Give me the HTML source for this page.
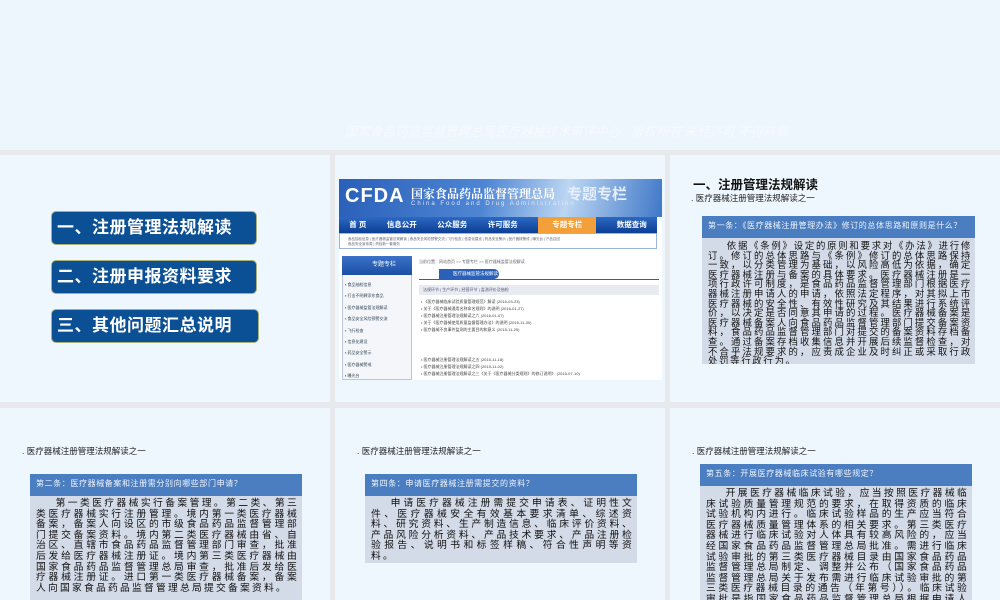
<!DOCTYPE html>
<html><head><meta charset="utf-8"><style>
*{margin:0;padding:0;box-sizing:border-box}
html,body{width:1000px;height:600px;overflow:hidden}
body{background:#e8e9ec;font-family:"Liberation Sans","Noto Sans CJK SC",sans-serif;position:relative}
.p{position:absolute;background:#eff7fe;overflow:hidden}
.a{position:absolute}
.btn{position:absolute;left:51px;width:206px;height:34px;background:#0b4f94;border:1.5px solid #a9b07a;border-radius:5px;color:#fff;font-weight:bold;font-size:17px;line-height:31px;padding-left:5px;letter-spacing:0.5px}
.sub{position:absolute;font-size:8.5px;color:#222;white-space:nowrap}
.box{position:absolute;background:#d3dbe8;overflow:hidden}
.bh{background:#4b7ec0;color:#eef3fb;font-size:8px;padding:4px 0 0 6px;height:22px;letter-spacing:0.6px}
.bt{font-size:9.4px;letter-spacing:1.7px;color:#111;line-height:9.6px;padding:4px 3px 0 6px;text-indent:2em;text-align:justify}
.r2 .bt{font-size:9.8px;letter-spacing:2.2px;line-height:10.6px}
</style></head><body>
<div class="p" style="left:0;top:0;width:1000px;height:150px;background:#edf5fd"></div>
<div class="a" style="left:345px;top:121px;font-size:12.5px;font-style:italic;color:#f5faff;white-space:nowrap">国家食品药品监督管理总局医疗器械技术审评中心 · 版权所有 未经许可 不得转载</div>

<div class="p" style="left:0;top:155px;width:330px;height:247px"></div>
<div class="btn" style="top:211px">一、注册管理法规解读</div>
<div class="btn" style="top:260px">二、注册申报资料要求</div>
<div class="btn" style="top:309px;width:208px">三、其他问题汇总说明</div>

<div class="p" style="left:335px;top:155px;width:330px;height:247px"></div>
<div class="a" style="left:339px;top:179px;width:323px;height:201px;background:#fff;overflow:hidden">
 <div class="a" style="left:0;top:0;width:323px;height:38px;background:linear-gradient(100deg,#2a5fb8 0%,#4f86d4 45%,#bcd6f2 70%,#3f78c8 100%)"></div>
 <div class="a" style="left:6px;top:6px;color:#fff;font-weight:bold;font-size:20px;letter-spacing:1px">CFDA</div>
 <div class="a" style="left:72px;top:6px;color:#fff;font-size:12px;font-family:'Noto Serif CJK SC',serif;font-weight:bold">国家食品药品监督管理总局</div>
 <div class="a" style="left:72px;top:22px;color:#dde8fa;font-size:6px;letter-spacing:2px">China Food and Drug Administration</div>
 <div class="a" style="left:228px;top:4px;color:#e6eefa;font-size:15px;font-weight:bold">专题专栏</div>
 <div class="a" style="left:0;top:38px;width:318px;height:16px;background:linear-gradient(#2c68c2,#0c3e94);color:#fff;font-size:7.5px;font-weight:bold;line-height:16px;display:flex;justify-content:space-around">
  <span>首 页</span><span>信息公开</span><span>公众服务</span><span>许可服务</span><span style="background:#f3a03a;padding:0 14px">专题专栏</span><span>数据查询</span></div>
 <div class="a" style="left:0;top:54px;width:318px;height:16px;border:1px solid #9bb5dc;background:#fff;font-size:3.5px;color:#667;padding:3px 8px;line-height:5px">食品抽检信息 | 医疗器械监管法规解读 | 食品安全风险预警交流 | 飞行检查 | 信息化建设 | 药品安全警示 | 医疗器械警戒 | 曝光台 | 产品召回<br>食品安全宣传周 | 药检新一套服务</div>
 <div class="a" style="left:3px;top:77px;width:70px;height:124px;background:#f4f6fa;border:1px solid #b9c8e0"></div>
 <div class="a" style="left:3px;top:77px;width:70px;height:19px;background:linear-gradient(#3a73c8,#1b4fa3);color:#fff;font-size:6px;line-height:19px;padding-left:30px">专题专栏</div>
 <div class="a" style="left:6px;top:100px;width:64px;font-size:4px;color:#345;line-height:11.4px">▪ 食品抽检信息<br>▪ 打击不明肆添东食品<br>▪ 医疗器械监管法规解读<br>▪ 食品安全风险预警交流<br>▪ 飞行检查<br>▪ 信息化建设<br>▪ 药品安全警示<br>▪ 医疗器械警戒<br>▪ 曝光台</div>
 <div class="a" style="left:80px;top:80px;font-size:4px;color:#667">当前位置：网站首页 &gt;&gt; 专题专栏 &gt;&gt; 医疗器械监管法规解读</div>
 <div class="a" style="left:100px;top:90px;width:60px;height:10px;background:#2a60b8;border-radius:0 6px 6px 0;color:#fff;font-size:4.5px;line-height:10px;padding-left:14px">医疗器械监管法规解读</div>
 <div class="a" style="left:80px;top:100px;width:240px;height:1px;background:#2a60b8"></div>
 <div class="a" style="left:80px;top:106px;width:240px;height:10px;background:#e8ecf2;font-size:4px;color:#557;line-height:10px;padding-left:4px">法规环节 | 生产环节 | 经营环节 | 监测评价及抽检</div>
 <div class="a" style="left:82px;top:119px;font-size:4px;color:#444;line-height:7px">• 《医疗器械临床试验质量管理规范》解读 (2016-03-23)<br>• 关于《医疗器械通用名称命名规则》的说明 (2016-01-27)<br>• 医疗器械注册管理法规解读之六 (2016-01-07)<br>• 关于《医疗器械使用质量监督管理办法》的说明 (2015-11-30)<br>• 医疗器械不良事件监测的主要目的和意义 (2015-11-25)</div>
 <div class="a" style="left:82px;top:177px;font-size:4px;color:#444;line-height:7px">• 医疗器械注册管理法规解读之五 (2015-11-18)<br>• 医疗器械注册管理法规解读之四 (2015-11-02)<br>• 医疗器械注册管理法规解读之三《关于《医疗器械分类规则》的修订说明》 (2015-07-10)</div>
</div>

<div class="p" style="left:670px;top:155px;width:330px;height:247px"></div>
<div class="a" style="left:693px;top:174px;font-size:12.5px;font-weight:bold;color:#111">一、注册管理法规解读</div>
<div class="sub" style="left:691px;top:192px">. 医疗器械注册管理法规解读之一</div>
<div class="box" style="left:702px;top:216px;width:273px;height:148px">
 <div class="bh">第一条：《医疗器械注册管理办法》修订的总体思路和原则是什么？</div>
 <div class="bt" style="padding-top:3px">依据《条例》设定的原则和要求对《办法》进行修订。修订的总体思路与《条例》修订的总体思路保持一致，以分类管理为基础，以风险高低为依据，确定医疗器械注册与备案的具体要求。医疗器械注册是一项行政许可制度，是食品药品监督管理部门根据医疗器械注册申请人的申请，依照法定程序，对其拟上市医疗器械的安全性、有效性研究及其结果进行系统评价，以决定是否同意其申请的过程。医疗器械备案是医疗器械备案人向食品药品监督管理部门提交备案资料，食品药品监督管理部门对提交的备案资料存档备查。通过备案存档收集信息并开展后续监督检查，对不合乎法规要求的，应责成企业及时纠正或采取行政处罚等行政行为。</div>
</div>

<div class="r2">
<div class="p" style="left:0;top:408px;width:330px;height:192px"></div>
<div class="sub" style="left:22px;top:445px">. 医疗器械注册管理法规解读之一</div>
<div class="box" style="left:30px;top:474px;width:272px;height:126px">
 <div class="bh">第二条：医疗器械备案和注册需分别向哪些部门申请？</div>
 <div class="bt" style="padding-top:3px">第一类医疗器械实行备案管理。第二类、第三类医疗器械实行注册管理。境内第一类医疗器械备案，备案人向设区的市级食品药品监督管理部门提交备案资料。境内第二类医疗器械由省、自治区、直辖市食品药品监督管理部门审查，批准后发给医疗器械注册证。境内第三类医疗器械由国家食品药品监督管理总局审查，批准后发给医疗器械注册证。进口第一类医疗器械备案，备案人向国家食品药品监督管理总局提交备案资料。</div>
</div>

<div class="p" style="left:335px;top:408px;width:330px;height:192px"></div>
<div class="sub" style="left:357px;top:445px">. 医疗器械注册管理法规解读之一</div>
<div class="box" style="left:365px;top:474px;width:272px;height:89px">
 <div class="bh">第四条：申请医疗器械注册需提交的资料？</div>
 <div class="bt" style="padding-top:3px">申请医疗器械注册需提交申请表、证明性文件、医疗器械安全有效基本要求清单、综述资料、研究资料、生产制造信息、临床评价资料、产品风险分析资料、产品技术要求、产品注册检验报告、说明书和标签样稿、符合性声明等资料。</div>
</div>

<div class="p" style="left:670px;top:408px;width:330px;height:192px"></div>
<div class="sub" style="left:692px;top:445px">. 医疗器械注册管理法规解读之一</div>
<div class="box" style="left:700px;top:464px;width:272px;height:136px">
 <div class="bh">第五条：开展医疗器械临床试验有哪些规定？</div>
 <div class="bt" style="padding-top:3px">开展医疗器械临床试验，应当按照医疗器械临床试验质量管理规范的要求，在取得资质的临床试验机构内进行。临床试验样品的生产应当符合医疗器械质量管理体系的相关要求。第三类医疗器械进行临床试验对人体具有较高风险的，应当经国家食品药品监督管理总局批准。需进行临床试验审批的第三类医疗器械目录由国家食品药品监督管理总局制定、调整并公布（国家食品药品监督管理总局关于发布需进行临床试验审批的第三类医疗器械目录的通告（年第号））。临床试验审批是指国家食品药品监督管理总局根据申请人的申请。</div>
</div>
</div>
</body></html>
